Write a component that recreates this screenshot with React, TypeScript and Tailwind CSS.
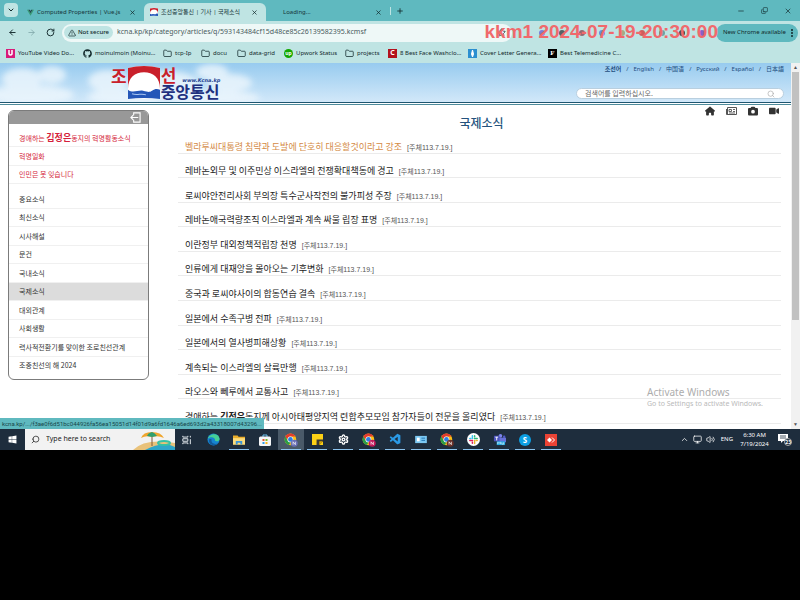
import type { ReactNode } from "react";
import {
  ArrowLeft, ArrowRight, RotateCw, TriangleAlert, Folder, X, Plus, Minus, Copy, ChevronDown, ChevronUp,
  Search, Star, MoreVertical, Monitor, Volume2, Settings,
} from "lucide-react";
import { FaGithub, FaWindows, FaHouse, FaCamera, FaVideo } from "react-icons/fa6";
import { VscVscode } from "react-icons/vsc";

const UI = "font-['Noto_Sans','Noto_Sans_CJK_KR',sans-serif]";
const KR = "font-['Noto_Sans_CJK_KR',sans-serif]";

function ChromeLogo({ badge }: { badge?: string }) {
  return (
    <svg viewBox="0 0 24 24" className="size-[14px]" aria-hidden="true">
      <circle cx="11" cy="11" r="10" fill="#fbc116" />
      <path d="M11 1a10 10 0 0 1 8.700 5H11a5 5 0 0 0-4.300 7.500L2.300 6A10 10 0 0 1 11 1z" fill="#e33b2e" />
      <path d="M2.300 6l4.400 7.500A5 5 0 0 0 11 16l-2.500 4.700A10 10 0 0 1 2.300 6z" fill="#2a9d48" />
      <circle cx="11" cy="11" r="5" fill="#fff" />
      <circle cx="11" cy="11" r="4" fill="#2f7de1" />
      {badge && <circle cx="17.500" cy="17.500" r="6" fill={badge} />}
      {badge && <path d="M15.500 20v-5l4 5v-5" fill="none" stroke="#fff" strokeWidth="1.200" />}
    </svg>
  );
}

function FlagMark({ className }: { className: string }) {
  return (
    <svg viewBox="0 0 32 32" preserveAspectRatio="none" className={className} aria-hidden="true">
      <path d="M0 2Q16-2 32 2V32H0z" fill="#fff" />
      <path d="M0 2Q16-2 32 2V22C32 11 25 6 16 6S0 11 0 22z" fill="#c9202b" />
      <path d="M0 23c5 4 10 0 15 1s6 2 9 0 5-2 8-1v9Q16 30 0 32z" fill="#2456b8" />
      <path d="M4 27c6 2 9-1 14 1" fill="none" stroke="#a9c6f2" />
    </svg>
  );
}

function Tab({ icon, title, active, className }: { icon?: ReactNode; title: string; active?: boolean; className: string }) {
  return (
    <div className={`flex items-center px-1 ${active ? "h-[18px] rounded-t-md bg-[#bfe4e3]" : "h-[18px]"} ${className}`}>
      <span className="flex w-3 shrink-0 justify-center">{icon}</span>
      <span className="ml-px grow truncate text-[6px] text-[#17363a]">{title}</span>
      <button aria-label={`Close ${title}`} className="mr-1"><X size={7} strokeWidth={2.500} /></button>
    </div>
  );
}

const bookmarks: { label: string; icon: ReactNode; width: string }[] = [
  { label: "YouTube Video Do...", width: "w-[77px]", icon: <svg viewBox="0 0 9 9" className="size-[9px]"><path d="M0 0h9v9H0z" fill="#d81b7a" /><path d="M3 1v4q1.500 2 3 0V1" fill="none" stroke="#fff" strokeWidth="1.500" /></svg> },
  { label: "moinulmoin (Moinu...", width: "w-[80px]", icon: <FaGithub size={9} /> },
  { label: "tcp-Ip", width: "w-[38px]", icon: <Folder size={9} /> },
  { label: "docu", width: "w-[36px]", icon: <Folder size={9} /> },
  { label: "data-grid", width: "w-[47px]", icon: <Folder size={9} /> },
  { label: "Upwork Status", width: "w-[61px]", icon: <span className="flex size-[9px] items-center justify-center rounded-full bg-[#14a800] text-[5px] font-bold text-white">up</span> },
  { label: "projects", width: "w-[43px]", icon: <Folder size={9} /> },
  { label: "8 Best Face Washclo...", width: "w-[80px]", icon: <span className="flex size-[9px] items-center justify-center bg-[#b3121d] text-[7px] font-bold text-white">C</span> },
  { label: "Cover Letter Genera...", width: "w-[80px]", icon: <svg viewBox="0 0 9 9" className="size-[9px]"><path d="M0 0h9v9H0z" fill="#2b8fd0" /><path d="M4.500 1l1 4-1 3-1-3z" fill="#fff" stroke="#fff" /></svg> },
  { label: "Best Telemedicine C...", width: "w-[80px]", icon: <span className="flex size-[9px] items-center justify-center bg-black font-['Liberation_Serif',serif] text-[7px] font-bold text-white">F</span> },
];

const extensions = ["bg-[#6a62d8]", "bg-[#3c4043]", "bg-[#8a4a52]", "bg-[#4f7be0]", "bg-[#a39a6c]", "bg-[#d33b3b]", "bg-[#5d8f93]", "bg-[#232323]", "bg-[#7a3fc0]"];

const languages = ["조선어", "English", "中国语", "Русский", "Español", "日本語"];

const leaderItems: ReactNode[] = [
  <>경애하는 <b className="text-[9px]">김정은</b>동지의 혁명활동소식</>,
  "혁명일화",
  "인민은 못 잊습니다",
];
const sections = ["중요소식", "최신소식", "시사해설", "문건", "국내소식", "국제소식", "대외관계", "사회생활", "력사적전환기를 맞이한 조로친선관계", "조중친선의 해 2024"];

const articles: ReactNode[] = [
  "벨라루씨대통령 침략과 도발에 단호히 대응할것이라고 강조",
  "레바논외무 및 이주민상 이스라엘의 전쟁확대책동에 경고",
  "로씨야안전리사회 부의장 특수군사작전의 불가피성 주장",
  "레바논애국력량조직 이스라엘과 계속 싸울 립장 표명",
  "이란정부 대외정책적립장 천명",
  "인류에게 대재앙을 몰아오는 기후변화",
  "중국과 로씨야사이의 합동연습 결속",
  "일본에서 수족구병 전파",
  "일본에서의 열사병피해상황",
  "계속되는 이스라엘의 살륙만행",
  "라오스와 뻬루에서 교통사고",
  <>경애하는 <b>김정은</b>동지께 아시아태평양지역 련합추모모임 참가자들이 전문을 올리였다</>,
];

function Sky() {
  return (
    <svg viewBox="0 0 280 39" preserveAspectRatio="xMinYMin slice" className="absolute inset-y-0 left-0 h-full w-[280px]" aria-hidden="true">
      <defs><filter id="soft" x="-20%" y="-20%" width="140%" height="140%"><feGaussianBlur stdDeviation="3" /></filter></defs>
      <g filter="url(#soft)" fill="#eef7fd" opacity=".8">
        <ellipse cx="22" cy="16" rx="20" ry="11" /><ellipse cx="52" cy="12" rx="14" ry="9" /><ellipse cx="30" cy="32" rx="44" ry="10" />
        <ellipse cx="108" cy="18" rx="20" ry="11" /><ellipse cx="125" cy="34" rx="38" ry="8" /><ellipse cx="165" cy="22" rx="34" ry="14" />
        <ellipse cx="212" cy="9" rx="16" ry="8" /><ellipse cx="230" cy="20" rx="22" ry="9" /><ellipse cx="215" cy="35" rx="45" ry="7" />
      </g>
    </svg>
  );
}

function TaskIcon({ label, open, active, children }: { label: string; open?: boolean; active?: boolean; children: ReactNode }) {
  return (
    <button aria-label={label} className={`relative flex h-full w-[26px] shrink-0 items-center justify-center ${active ? "bg-[#4a5a69]" : ""}`}>
      {children}
      {open && <span className="absolute inset-x-[3px] bottom-0 h-px bg-[#8cc4ee]" />}
    </button>
  );
}

function Browser() {
  return (
    <header className={`relative text-[#12292c] ${UI}`}>
      <div className="flex h-[21px] items-end bg-[#5fb9bf]">
        <button aria-label="Search tabs" className="mb-1 ml-1 flex size-[14px] items-center justify-center rounded bg-[#bfe4e3]"><ChevronDown size={8} strokeWidth={3} /></button>
        <Tab className="ml-[2px] w-[124px]" title="Computed Properties | Vue.js" icon={<svg viewBox="0 0 10 10" className="size-[7px]"><path d="M0 1h2l3 5 3-5h2L5 9.500z" fill="#3a9b76" /><path d="M2 1h2l1 2 1-2h2L5 6z" fill="#234b4d" /></svg>} />
        <Tab className="w-[122px]" active title="조선중앙통신 | 기사 | 국제소식" icon={<FlagMark className="size-2" />} />
        <Tab className="w-[124px]" title="Loading..." />
        <button aria-label="New tab" className="mb-[6px] flex h-2 items-center border-l border-[#bfe4e3] pl-[5px]"><Plus size={8} strokeWidth={2.500} /></button>
        <div className="ml-auto flex h-full items-center gap-4 pr-2">
          <button aria-label="Minimize"><Minus size={8} /></button>
          <button aria-label="Restore"><Copy size={7} className="-scale-x-100 rotate-180" /></button>
          <button aria-label="Close"><X size={8} /></button>
        </div>
      </div>
      <div className="flex h-[23px] items-center bg-[#bfe4e3] pr-[2px]">
        <div className="flex w-[62px] items-center gap-[10px] pl-2">
          <button aria-label="Back"><ArrowLeft size={9} strokeWidth={2.500} /></button>
          <button aria-label="Forward"><ArrowRight size={9} className="text-[#7ba3a5]" /></button>
          <button aria-label="Reload"><RotateCw size={9} strokeWidth={2.500} /></button>
        </div>
        <div className="flex h-[18px] w-[450px] items-center rounded-full bg-[#eef8f7] px-[2px]">
          <span className="flex h-[13px] w-[49px] shrink-0 items-center justify-center gap-[2px] rounded-full bg-[#bfe4e3] text-[6px] font-medium"><TriangleAlert size={8} />Not secure</span>
          <input aria-label="Address" readOnly defaultValue="kcna.kp/kp/category/articles/q/593143484cf15d48ce85c26139582395.kcmsf" className="ml-1 min-w-0 grow bg-transparent text-[7px] text-[#4a5c5e] outline-none" />
          <Star size={9} className="mr-1" />
        </div>
        <div className="flex grow items-center justify-around pl-5 pr-1">
          {extensions.map((color) => <span key={color} className={`size-[6px] rounded-sm opacity-80 ${color}`} />)}
        </div>
        <button className="flex h-[18px] w-[82px] items-center justify-end whitespace-nowrap rounded-full bg-[#5fb9bf] text-[6px]">New Chrome available<MoreVertical size={10} strokeWidth={3} className="mx-px" /></button>
      </div>
      <nav aria-label="Bookmarks" className="flex h-[19px] items-center overflow-hidden bg-[#bfe4e3] pl-[6px] text-[6px]">
        {bookmarks.map((b) => (
          <a key={b.label} href="#" className={`flex shrink-0 items-center gap-[3px] whitespace-nowrap ${b.width}`}>{b.icon}{b.label}</a>
        ))}
      </nav>
      <p className="absolute right-[82px] top-[21px] whitespace-nowrap font-['Liberation_Sans',sans-serif] text-[19px] font-bold leading-[22px] text-[#f0696c]">kkm1 2024-07-19-20:30:00</p>
    </header>
  );
}

function SiteHeader() {
  return (
    <div className="relative flex h-[42px] border-b border-[#4e8c9c] bg-white pb-px">
      <div className="relative flex grow justify-between border-b-[1px] border-[#1f5670] bg-linear-to-b from-[#97cbef] to-[#d2e8f9]">
        <Sky />
        <h1 className={`relative ml-[111px] flex pt-[3px] font-bold ${KR}`}>
          <span className="mt-[1px] text-[17px] leading-[18px] text-[#c9202b]">조</span>
          <FlagMark className="mx-px h-[33px] w-[32px]" />
          <span className="flex flex-col">
            <span className="flex h-[17px] text-[17px] leading-[17px] text-[#c9202b]">선<small className="ml-[6px] mt-[11px] h-[6px] font-['DejaVu_Sans',sans-serif] text-[5px] font-bold italic leading-[6px] text-[#26428f]">www.Kcna.kp</small></span>
            <span className="text-[16px] leading-[16px] text-[#20307f]">중앙통신</span>
          </span>
        </h1>
        <div className="relative flex flex-col items-end pr-[7px]">
          <nav className="flex gap-[5px] pt-[2px] font-['Noto_Sans','Noto_Sans_CJK_SC',sans-serif] text-[6px] leading-[9px] text-[#1f4e80]">
            {languages.map((l, i) => (
              <span key={l} className="flex gap-[5px]">{i > 0 && <span>/</span>}<a href="#" className={i === 0 ? "font-bold" : ""}>{l}</a></span>
            ))}
          </nav>
          <label className="mt-[14px] flex h-[11px] w-[208px] items-center rounded-full border border-[#b9cfdf] bg-white px-2">
            <input aria-label="검색" placeholder="검색어를 입력하십시오." className={`min-w-0 grow bg-transparent text-[7px] leading-[9px] outline-none placeholder:text-[#666] ${KR}`} />
            <Search size={8} className="text-[#aaa]" />
          </label>
        </div>
      </div>
    </div>
  );
}

function Sidebar() {
  return (
    <aside className={`ml-2 mt-[5px] h-fit w-[141px] shrink-0 overflow-hidden rounded-md border border-[#7b7b7b] pb-[5px] text-[7px] text-[#333] ${KR}`}>
      <div className="flex h-[13px] items-center justify-end bg-[#989898] pr-[7px]">
        <button aria-label="접기">
          <svg viewBox="0 0 12 12" className="size-[11px]" fill="none" stroke="#fff" strokeWidth="1.200"><path d="M4 3.500V1h7v10H4V8.500M9 6H1M3.500 3.500L1 6l2.500 2.500" /></svg>
        </button>
      </div>
      <ul className="mt-[5px] flex h-[55px] flex-col text-[#d51f3c]">
        {leaderItems.map((item, i) => <li key={i} className="flex flex-1 items-center border-b border-[#f0f0f0] px-[10px]"><a href="#" className="whitespace-nowrap">{item}</a></li>)}
      </ul>
      <ul className="mt-[6px] flex h-[184px] flex-col">
        {sections.map((s) => <li key={s} className={`flex flex-1 items-center border-b border-[#f0f0f0] px-[10px] last:border-b-0 ${s === "국제소식" ? "bg-[#dcdcdc]" : ""}`}><a href="#" className="whitespace-nowrap">{s}</a></li>)}
      </ul>
    </aside>
  );
}

function Articles() {
  return (
    <main className={`ml-[29px] mr-[10px] min-w-0 grow ${KR}`}>
      <div className="flex h-3 items-center justify-end gap-[11px] pr-[2px] text-[#333]">
        <a href="#" aria-label="Home"><FaHouse size={10} /></a>
        <a href="#" aria-label="News">
          <svg viewBox="0 0 11 8" className="h-2 w-[11px]" fill="none" stroke="#555"><path d="M1.500 .5h9v7h-9zM.5 2v5.500h2" /><path d="M3 2.500h2.500v2H3zM7 2.500h2M7 4.500h2M3 6h6" strokeWidth=".9" /></svg>
        </a>
        <a href="#" aria-label="Photo"><FaCamera size={10} /></a>
        <a href="#" aria-label="Video"><FaVideo size={10} /></a>
      </div>
      <h2 className="pl-1 text-center text-[12px] font-medium leading-[12px] text-[#24527d]">국제소식</h2>
      <ul className="flex h-[295px] flex-col">
        {articles.map((a, i) => (
          <li key={i} className="flex flex-1 items-end border-b border-[#ebebeb] pl-[7px]">
            <a href="#" className={`whitespace-nowrap text-[9px] leading-[12px] ${i === 0 ? "text-[#d48a45]" : "text-[#222]"}`}>{a}</a>
            <time className="ml-[5px] whitespace-nowrap font-['Liberation_Sans','Noto_Sans_CJK_KR',sans-serif] text-[7px] leading-[10px] text-[#555]">[주체113.7.19.]</time>
          </li>
        ))}
      </ul>
    </main>
  );
}

function Taskbar() {
  return (
    <footer className={`flex h-[21px] items-center overflow-hidden bg-[#1e2d3d] text-white ${UI}`}>
      <button aria-label="Start" className="flex w-[25px] shrink-0 justify-center"><FaWindows size={9} /></button>
      <label className="relative flex h-full w-[150px] shrink-0 items-center gap-[6px] overflow-hidden bg-[#f2f2f2] pl-[6px] text-[#222]">
        <Search size={9} className="-scale-x-100" />
        <input aria-label="Search" placeholder="Type here to search" className="w-[90px] bg-transparent text-[7px] outline-none placeholder:text-[#222]" />
        <svg viewBox="0 0 42 21" className="absolute bottom-0 right-0 h-[21px] w-[42px]" aria-hidden="true">
          <path d="M0 21Q12 9 42 14V21z" fill="#e9c27a" /><path d="M12 21Q30 12 42 18V21z" fill="#2fa6c9" />
          <path d="M19 4V17" stroke="#7a5a3a" /><path d="M8 9Q10 3 19 3T31 9Q25 6 19 8 13 6 8 9z" fill="#f0a52c" />
          <path d="M14 7Q15 4 19 3 22 4 24 7L19 8z" fill="#2f9e6e" /><ellipse cx="31" cy="14" rx="6" ry="2" fill="none" stroke="#35c2a5" strokeWidth="2" />
        </svg>
      </label>
      <div className="-ml-px flex h-full">
        <TaskIcon label="Task view"><svg viewBox="0 0 12 12" className="size-[10px]" fill="none" stroke="#dfe5ea" strokeWidth="1.200"><path d="M1 1v1.500h6V1M1 4.500h6v3H1zM1 11V9.500h6V11M10 1v2M10 5v6" /></svg></TaskIcon>
        <TaskIcon label="Edge"><svg viewBox="0 0 14 14" className="size-[13px]"><circle cx="7" cy="7" r="6.500" fill="#1684d0" /><path d="M1 6C2 1 12-1 13.500 6c.4 3-4 3.500-5 2 1-3-4-5-7.500-2z" fill="#45cf95" /><path d="M5 7c-1 4 3 6 7 4-3 4-10 2-10-3 0-1 1-2 3-1z" fill="#125a9c" /></svg></TaskIcon>
        <TaskIcon label="File Explorer" open><svg viewBox="0 0 13 12" className="size-3"><path d="M0 1h5l1 1.500h7V11H0z" fill="#e9ad2b" /><path d="M0 4h13v7H0z" fill="#fbdc7c" /><path d="M3 7h7v4H8V9H5v2H3z" fill="#3b95d8" /></svg></TaskIcon>
        <TaskIcon label="Store"><svg viewBox="0 0 12 12" className="size-3"><path d="M4 3V1h4v2" fill="none" stroke="#6dc4f0" /><rect y="2.500" width="12" height="9.500" rx="1.500" fill="#f4f6f8" /><path d="M3.500 5h2v2h-2z" fill="#e5532d" /><path d="M6.500 5h2v2h-2z" fill="#7ab827" /><path d="M3.500 8h2v2h-2z" fill="#2a9be8" /><path d="M6.500 8h2v2h-2z" fill="#f6b61c" /></svg></TaskIcon>
        <TaskIcon label="Chrome" open active><ChromeLogo badge="#6a6fb4" /></TaskIcon>
        <TaskIcon label="Sticky Notes" open><svg viewBox="0 0 12 12" className="size-[11px]"><path d="M0 0h12v12H0z" fill="#fcd116" /><path d="M5 6h7v2l-4 4H5z" fill="#3c3a31" /><path d="M8 12V8h4z" fill="#e0a800" /></svg></TaskIcon>
        <TaskIcon label="Settings" open><Settings size={11} strokeWidth={3} /></TaskIcon>
        <TaskIcon label="Chrome profile 2" open><ChromeLogo badge="#c2185b" /></TaskIcon>
        <TaskIcon label="VS Code" open><VscVscode size={13} color="#2b9ae6" /></TaskIcon>
        <TaskIcon label="Contacts" open><svg viewBox="0 0 13 10" className="h-[9px] w-3"><path d="M0 1h13v8H0z" fill="#7cc8f2" /><path d="M2 3h3v4H2z" fill="#fff" /><path d="M7 3.500h4M7 6h4" stroke="#1b6fae" /></svg></TaskIcon>
        <TaskIcon label="Chrome profile 3" open><ChromeLogo badge="#6b3129" /></TaskIcon>
        <TaskIcon label="Slack" open><svg viewBox="0 0 14 14" className="size-[13px]" fill="none" strokeWidth="1.600" strokeLinecap="round"><circle cx="7" cy="7" r="7" fill="#fff" /><path d="M5.800 3v3M3 5.800h1" stroke="#36c5f0" /><path d="M8 5.800h3M8.200 3v1" stroke="#2eb67d" /><path d="M8.200 8.200v3M10 8.200h1" stroke="#ecb22e" /><path d="M3 8.200h3M5.800 10v1" stroke="#e01e5a" /></svg></TaskIcon>
        <TaskIcon label="Teams" open><svg viewBox="0 0 14 14" className="size-[13px]"><circle cx="8" cy="3" r="2" fill="#7b83eb" /><circle cx="12" cy="4" r="1.300" fill="#5059c9" /><path d="M5 5h9v5H5z" fill="#6870d8" /><path d="M1 3h6v6H1z" fill="#4b53bc" /><path d="M2.500 4.500h3M4 4.500V8" stroke="#fff" /><path d="M4 9h9v4H4z" fill="#25a9e0" /><path d="M5 12v-2l1.500 1L8 10v2M9.500 10v2h2v-2" fill="none" stroke="#fff" strokeWidth=".6" /></svg></TaskIcon>
        <TaskIcon label="Skype" open><span className="flex size-3 items-center justify-center rounded-full bg-[#0c9fe4] text-[8px] font-bold">S</span></TaskIcon>
        <TaskIcon label="AnyDesk" open><svg viewBox="0 0 12 12" className="size-3"><path d="M0 0h12v12H0z" fill="#ea4335" /><path d="M4.500 3.500L7 6 4.500 8.500 2 6z" fill="#fff" /><path d="M7 3.500L9.500 6 7 8.500" fill="none" stroke="#fff" /></svg></TaskIcon>
      </div>
      <div className="ml-auto flex items-center gap-1 pr-2 text-[6px]">
        <ChevronUp size={9} /><Monitor size={9} /><Volume2 size={9} /><span className="mx-[2px]">ENG</span>
        <time className="w-[31px] text-center leading-[9px]">6:30 AM<br />7/19/2024</time>
        <span className="relative ml-1 flex h-3 w-[14px]"><svg viewBox="0 0 10 9" className="h-[9px] w-[10px]"><path d="M0 0h10v7H5L3 9V7H0z" fill="#fff" /><path d="M2 2h6M2 4h6" stroke="#1e2d3d" strokeWidth=".8" /></svg><b className="absolute bottom-0 right-0 rounded-full border border-[#aaa] bg-[#1e2d3d] text-[5px] leading-[6px]">23</b></span>
      </div>
    </footer>
  );
}

export default function App() {
  return (
    <div className="min-h-screen bg-black">
      <Browser />
      <div className="relative flex bg-white">
        <div className="min-w-0 grow">
          <SiteHeader />
          <div className="flex pb-[5px]"><Sidebar /><Articles /></div>
        </div>
        <div className="flex w-[9px] shrink-0 flex-col items-center bg-[#f1f1f1] text-[5px] leading-[9px] text-[#555]" aria-hidden="true">
          <span>▲</span><div className="h-[248px] w-[7px] bg-[#c1c1c1]" /><span className="mt-auto">▼</span>
        </div>
        <p className="absolute bottom-0 left-0 whitespace-nowrap bg-[#5fb9bf] px-[2px] font-['Roboto',sans-serif] text-[6px] leading-[11px] text-[#17474b]">kcna.kp/.../f3ae0f6d51bc044926fa56ea15051d14f01d9a6fd1646a6ed693d2a43318007d43296...</p>
        <p className={`absolute bottom-[19px] right-[34px] w-[119px] whitespace-nowrap text-[7px] leading-[12px] text-[#b9b9b9] ${UI}`}><span className="block text-[10px] text-[#adadad]">Activate Windows</span>Go to Settings to activate Windows.</p>
      </div>
      <Taskbar />
    </div>
  );
}
